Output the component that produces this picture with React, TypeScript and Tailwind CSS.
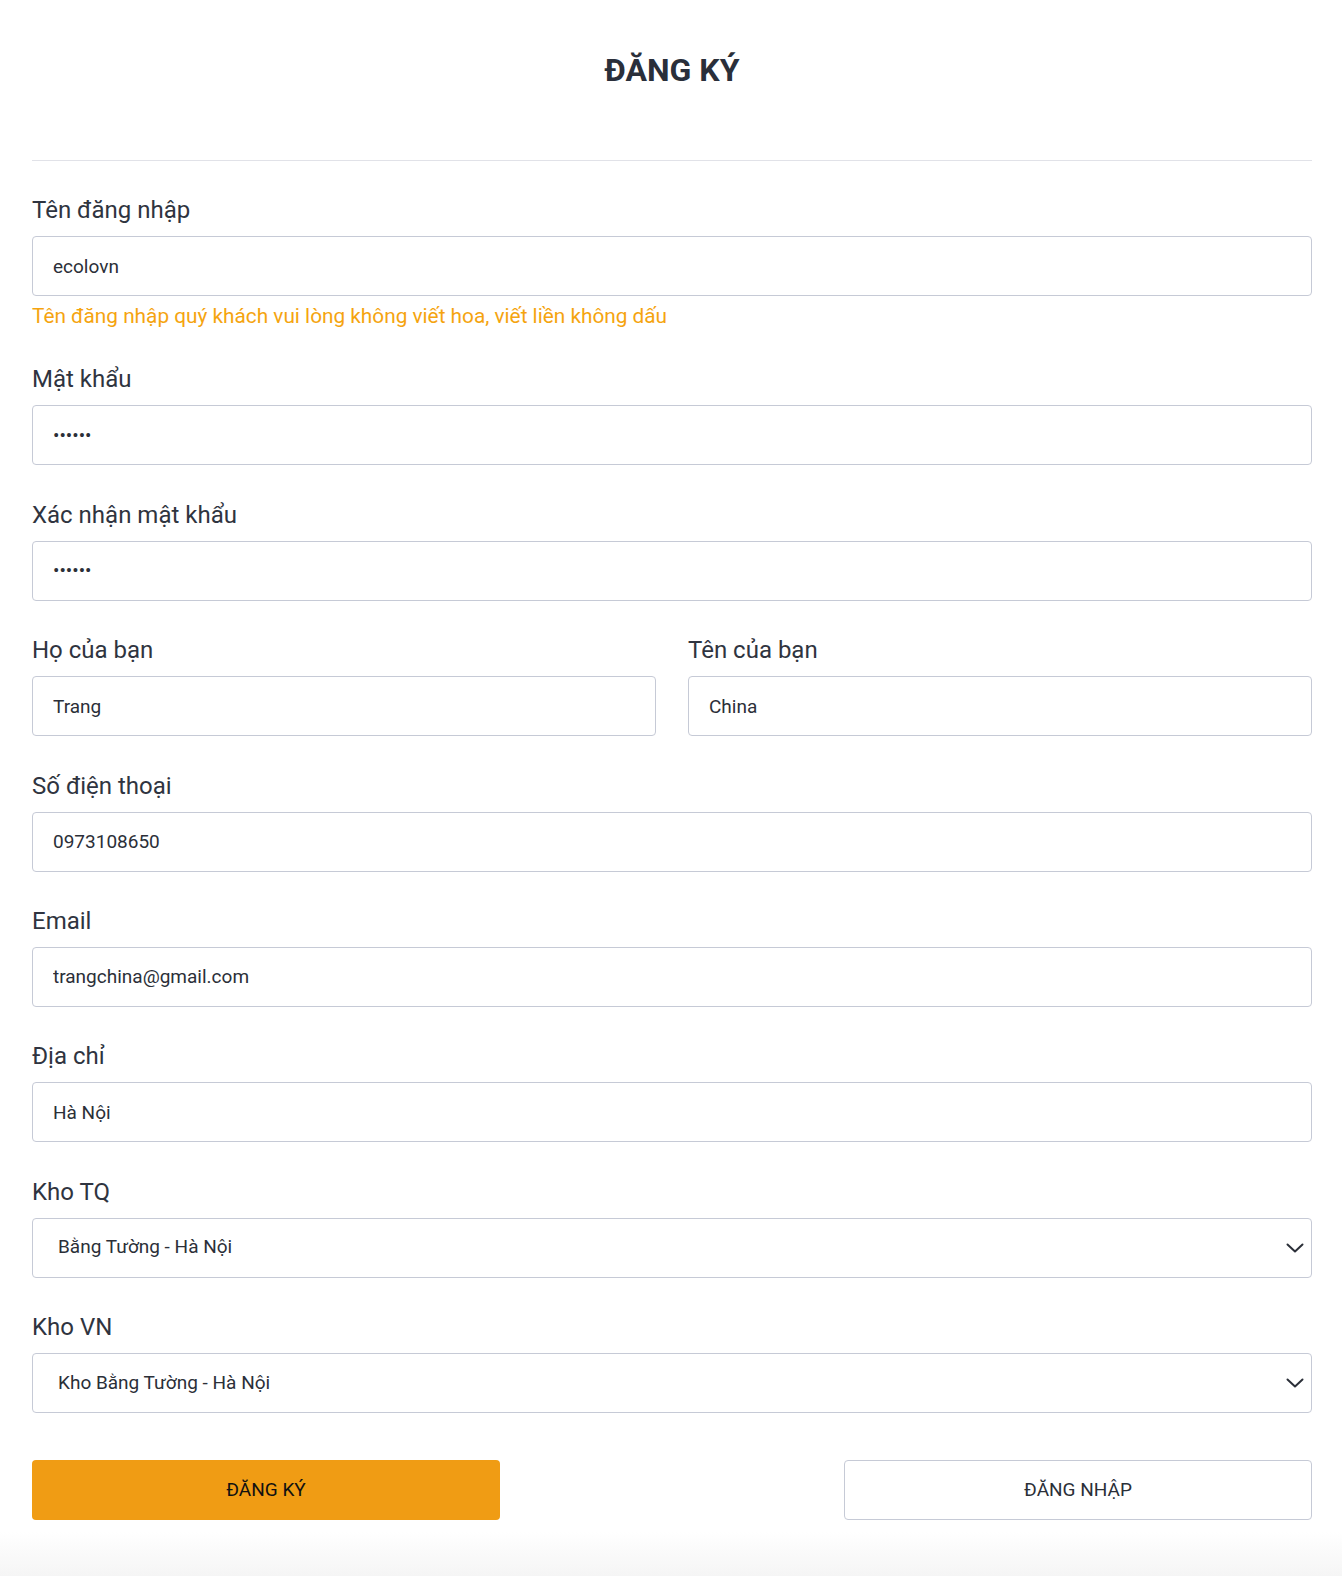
import React, { useState } from "react";

const font = { fontFamily: "Roboto, 'Noto Sans', Arial, sans-serif" };

const Chevron = () => (
  <svg width="18" height="10" viewBox="0 0 18 10" fill="none" className="pointer-events-none absolute right-[8px] top-1/2 -translate-y-1/2">
    <path d="M1.5 1.5L9 8.5L16.5 1.5" stroke="#2b2f38" strokeWidth="2" strokeLinecap="round" strokeLinejoin="round" />
  </svg>
);

const Field = ({ label, children, className = "" }) => (
  <div className={className}>
    <label className="block text-[24px] leading-[30px] text-[#2f3440] mb-[11px]">{label}</label>
    {children}
  </div>
);

const inputCls =
  "w-full h-[60px] rounded-[4px] border border-[#c6cad6] bg-white px-[20px] text-[19px] text-[#2b2f38] outline-none";

const App = () => {
  const [form, setForm] = useState({
    username: "ecolovn",
    password: "123456",
    confirm: "123456",
    lastName: "Trang",
    firstName: "China",
    phone: "0973108650",
    email: "trangchina@gmail.com",
    address: "Hà Nội",
    khoTQ: "Bằng Tường - Hà Nội",
    khoVN: "Kho Bằng Tường - Hà Nội",
  });

  const set = (key) => (e) => setForm({ ...form, [key]: e.target.value });

  return (
    <div className="h-[1576px] overflow-hidden bg-white flex flex-col" style={font}>
      <div className="flex-1 pl-[32px] pr-[30px]">
        <div className="h-[161px] pt-[48px] border-b border-[#e1e2e8]">
          <h1 className="text-center text-[32px] leading-[44px] font-bold text-[#2a2f3a]">ĐĂNG KÝ</h1>
        </div>

        <div className="flex flex-col gap-[34.4px] pt-[34px]">
          <div>
            <Field label="Tên đăng nhập">
              <input className={inputCls} value={form.username} onChange={set("username")} />
            </Field>
            <p className="mt-[6px] text-[20.8px] leading-[28px] text-[#f5a40f]">
              Tên đăng nhập quý khách vui lòng không viết hoa, viết liền không dấu
            </p>
          </div>

          <Field label="Mật khẩu">
            <input type="password" className={inputCls} value={form.password} onChange={set("password")} />
          </Field>

          <Field label="Xác nhận mật khẩu">
            <input type="password" className={inputCls} value={form.confirm} onChange={set("confirm")} />
          </Field>

          <div className="grid grid-cols-2 gap-[32px]">
            <Field label="Họ của bạn">
              <input className={inputCls} value={form.lastName} onChange={set("lastName")} />
            </Field>
            <Field label="Tên của bạn">
              <input className={inputCls} value={form.firstName} onChange={set("firstName")} />
            </Field>
          </div>

          <Field label="Số điện thoại">
            <input className={inputCls} value={form.phone} onChange={set("phone")} />
          </Field>

          <Field label="Email">
            <input className={inputCls} value={form.email} onChange={set("email")} />
          </Field>

          <Field label="Địa chỉ">
            <input className={inputCls} value={form.address} onChange={set("address")} />
          </Field>

          <Field label="Kho TQ">
            <div className="relative">
              <select className={inputCls + " appearance-none pl-[25px]"} value={form.khoTQ} onChange={set("khoTQ")}>
                <option>Bằng Tường - Hà Nội</option>
                <option>Quảng Châu - Hà Nội</option>
              </select>
              <Chevron />
            </div>
          </Field>

          <Field label="Kho VN">
            <div className="relative">
              <select className={inputCls + " appearance-none pl-[25px]"} value={form.khoVN} onChange={set("khoVN")}>
                <option>Kho Bằng Tường - Hà Nội</option>
                <option>Kho Hồ Chí Minh</option>
              </select>
              <Chevron />
            </div>
          </Field>
        </div>

        <div className="flex justify-between mt-[47px]">
          <button className="w-[468px] h-[60px] rounded-[4px] bg-[#f09c14] text-[19px] text-[#111] uppercase">
            Đăng ký
          </button>
          <button className="w-[468px] h-[60px] rounded-[4px] border border-[#c6cad6] bg-white text-[19px] text-[#2b2f38] uppercase">
            Đăng nhập
          </button>
        </div>
      </div>
      <div className="h-[44px] bg-gradient-to-b from-white to-[#f5f5f5]" />
    </div>
  );
};

export default App;
